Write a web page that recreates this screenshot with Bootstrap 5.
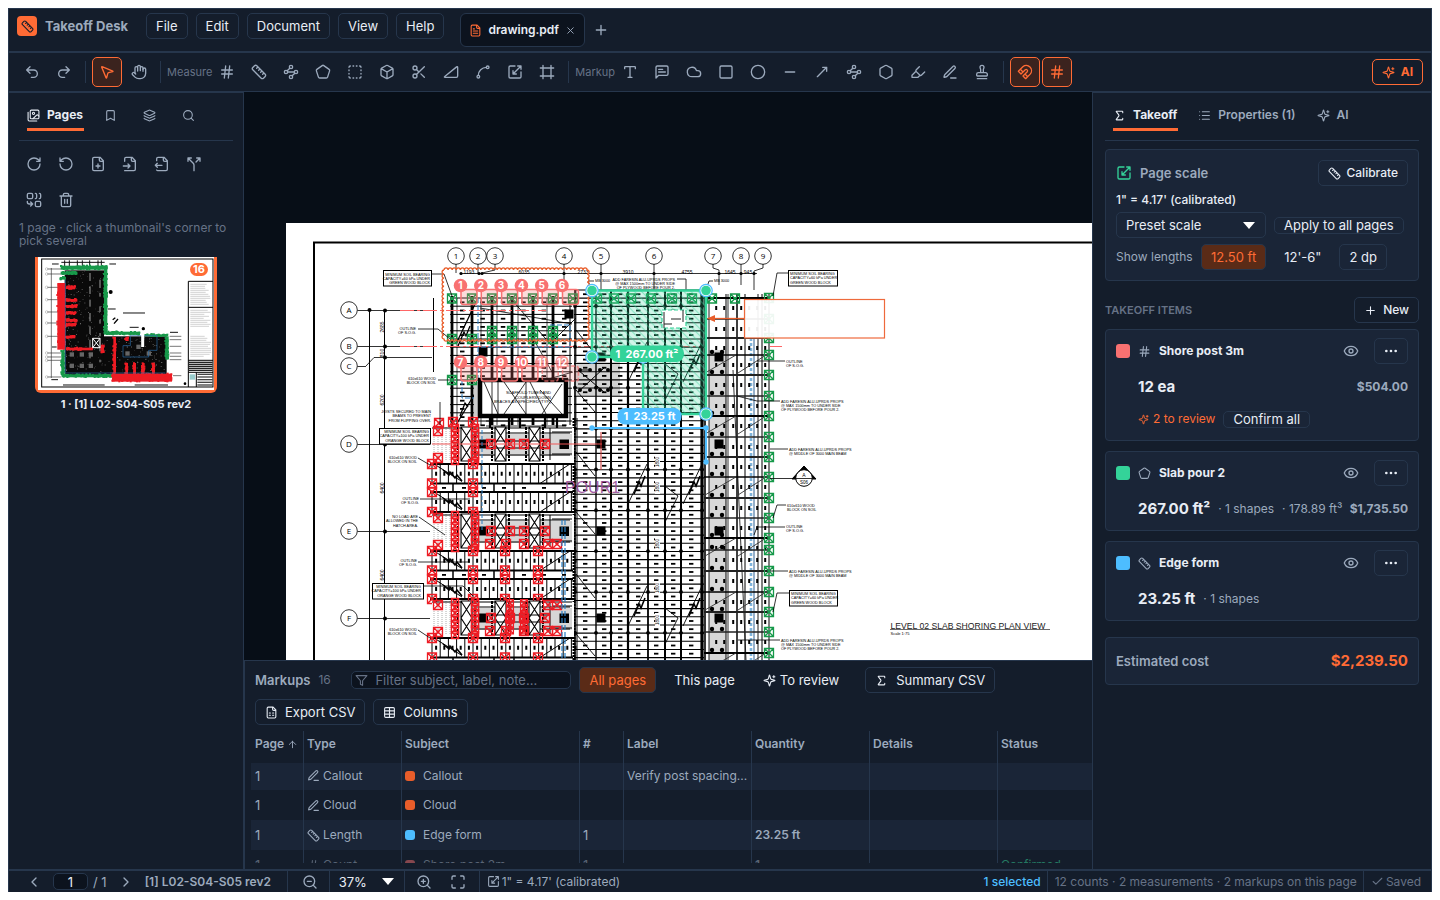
<!DOCTYPE html>
<html lang="en">
<head>
<meta charset="utf-8">
<meta name="viewport" content="width=device-width, initial-scale=1">
<title>Takeoff Desk</title>
<link href="https://cdn.jsdelivr.net/npm/bootstrap@5.3.0/dist/css/bootstrap.min.css" rel="stylesheet">
<style>
:root{--bg:#141d2b;--panel:#1a2537;--line:#26364c;--deep:#0c131e;--canvas:#070e17;--fg:#e8edf5;--mid:#9caabd;--dim:#667286;--accent:#ff6b35;--accent-bg:#5a2b17;--blue:#4dbdff;--green:#34d399}
body{background:#fff;font-family:Inter,"Liberation Sans",sans-serif;font-size:12px;line-height:16px;color:var(--mid);padding:8px;height:100vh;overflow:hidden}
.app{background:var(--bg);border:1px solid var(--line);border-bottom:0;height:100%}
.ic{width:16px;height:16px;fill:none;stroke:currentColor;stroke-width:2;stroke-linecap:round;stroke-linejoin:round;flex:none}
.ic-s{width:13px;height:13px}
.ic-xs{width:11px;height:11px}
.good{color:var(--green)}
.muted{color:var(--dim)}
.topbar{height:43px;padding:4px 8px;border-bottom:1px solid var(--line)}
.brand{height:26px}
.logo{width:20px;height:20px;border-radius:4px;background:var(--accent);color:#141d2b}
.brand-name{font-size:13px;font-weight:700;color:var(--mid);min-width:85px}
.tool-text{font-size:11px;color:var(--dim);margin-right:-2px}
.ui-btn{--bs-btn-padding-x:9px;--bs-btn-padding-y:0;--bs-btn-font-size:13px;--bs-btn-line-height:16px;--bs-btn-font-weight:400;--bs-btn-color:var(--fg);--bs-btn-border-color:var(--line);--bs-btn-hover-color:#fff;--bs-btn-hover-bg:#223047;--bs-btn-hover-border-color:var(--line);--bs-btn-border-radius:5px;height:26px;display:inline-flex;align-items:center;justify-content:center;gap:7px;white-space:nowrap;flex:none}
.ui-btn.text12{font-size:12px;font-weight:500;gap:6px}
.ui-btn.plain{border-color:transparent}
.ui-btn.on{background:var(--accent-bg);color:var(--accent);border-color:var(--line)}
.ui-btn.slim{height:17px;overflow:visible}
.ui-btn.more{width:34px;padding:0}
.ui-btn.outline{border-color:var(--accent);color:var(--accent);font-weight:700;font-size:12px;gap:6px}
.tool{width:30px;height:30px;border:1px solid transparent;border-radius:5px;background:none;color:var(--mid);display:flex;align-items:center;justify-content:center;padding:0;flex:none}
.tool.on{border-color:var(--accent);background:#3b231e;color:var(--accent)}
.icon-btn{background:none;border:0;padding:0;color:var(--mid);display:flex}
.toolbar{height:40px;padding:4px 8px;border-top:1px solid var(--line);border-bottom:1px solid var(--line);gap:2px}
.vsep{width:1px;height:22px;background:var(--line);margin:0 4px;flex:none}
.doc-tab{height:34px;background:var(--deep);border:1px solid var(--line);border-radius:6px;padding:0 8px;color:var(--fg);font-weight:600;margin-left:8px;gap:6px}
.side{border-top:1px solid var(--line);border-bottom:1px solid var(--line)}
.side-left{width:235px;border-right:1px solid var(--line);padding:0 10px}
.side-right{width:339px;border-left:1px solid var(--line);padding:0 12px}
.tabs{padding:9px 8px;gap:20px;border-bottom:1px solid var(--line)}
.tabs button{background:none;border:0;border-bottom:3px solid transparent;height:29px;padding:0 1px 0 0;color:var(--mid);font-weight:600;display:flex;align-items:center;gap:7px}
.tabs button.on{border-color:var(--accent);color:var(--fg);font-weight:700}
.tabs .solo{padding-right:6px}
.page-tools{gap:6px 2px;padding-top:8px}
.hint{line-height:13px;color:var(--dim);padding:6px 4px 10px 0}
.thumb{width:182px;border:3px solid var(--accent);border-top:0;border-radius:0 0 6px 6px;background:#fff;padding:0;display:block}
.thumb svg{display:block;width:100%}
.thumb-name{font-size:11px;font-weight:700;color:var(--fg);margin-top:3px}
.pill{top:6px;right:6px;background:var(--accent);color:#fff;font-size:11px;line-height:13px;font-weight:700;border-radius:7px;padding:0 3px}
.canvas{background:var(--canvas);min-height:0}
.canvas svg{display:block;width:100%;height:100%}
.box{background:var(--panel);border:1px solid var(--line);border-radius:4px;padding:8px 10px 10px}
.head13{font-size:13px;font-weight:600}
.scale-head{margin-top:2px}
.scale-now{color:var(--fg);font-weight:500;padding:6px 0 4px}
.len-row{margin-top:6px}
.len-label{width:77px}
.big{font-size:15px;font-weight:700;color:var(--fg)}
.accent{color:var(--accent)}
.price{font-weight:700}
.sw{width:14px;height:14px;border-radius:3px;flex:none}
.sw10{width:10px;height:10px;border-radius:3px;flex:none}
.item-title{font-weight:700;color:var(--fg)}
.item-row{height:22px;padding-left:22px}
.item-row.first{margin-top:12px}
.item-row.next{margin-top:10px}
.eye-btn{margin-right:15px}
.items{gap:10px}
.sec-bar{margin:16px 0 6px}
.sec-title{font-size:11px;font-weight:600;color:var(--dim)}
.total{height:48px;padding:0 10px}
.sel{position:relative}
.sel select{appearance:none;background:transparent;border:1px solid var(--line);border-radius:5px;color:var(--fg);font-size:13px;height:26px;padding:0 9px;width:150px}
.sel::after{content:"";position:absolute;right:11px;top:10px;border:6px solid transparent;border-top:7px solid #fff;border-bottom:0;pointer-events:none}
.sel.zoom select{width:76px;height:21px;border-width:0 1px;border-radius:0}
.sel.zoom::after{top:7px}
.drawer{height:210px;border:1px solid var(--line);border-width:1px 0 1px 1px;overflow:hidden}
.drawer-bar{padding:6px 10px 0}
.tally{width:25px}
.filter{width:220px;height:18px;background:var(--deep);border:1px solid var(--line);border-radius:5px;padding-left:3px;gap:7px;color:var(--dim)}
.filter input{background:none;border:0;outline:0;color:var(--fg);font-size:13px;height:16px;padding:0;width:100%;min-width:0}
.filter input::placeholder{color:var(--dim);opacity:1}
.grid-wrap{margin:6px 0 0 6px;height:132px;overflow:hidden}
.marks{table-layout:fixed;width:100%;border-collapse:separate;border-spacing:0}
.marks th{height:32px;font-weight:600;padding:0 4px 6px 3px;border-right:1px solid var(--line);white-space:nowrap}
.marks td{height:30px;padding:0 4px 0 3px;border-right:1px solid var(--line);white-space:nowrap;overflow:hidden}
.marks th:first-child,.marks td:first-child{padding-left:4px}
.marks th:last-child,.marks td:last-child{border-right:0}
.marks tbody tr:first-child td{height:27px;padding-bottom:2px}
.marks tbody tr:nth-child(odd) td{background:var(--panel)}
.marks .fade-row td>*{opacity:.5}
.marks .num{font-size:13px}
.marks .qty{font-weight:600}
.marks .kind{gap:3px}
.w-page{width:53px}.w-type{width:98px}.w-subj{width:178px}.w-no{width:44px}.w-128{width:128px}.w-qty{width:118px}
.status{height:22px;border-top:1px solid var(--line);padding:0 10px 0 17px}
.status .rule{width:1px;align-self:stretch;background:var(--line)}
.page-no{width:35px;height:17px;background:var(--deep);border:1px solid var(--line);border-radius:5px;color:var(--fg);font-size:13px;text-align:center;padding:0;margin:0 5px 0 11px}
.of-pages{font-size:13px}
.gap-x{margin:0 11px}
.sheet-name{font-weight:600;width:142px}
.z-out{margin:0 11px 0 14px}.z-in{margin:0 18px 0 11px}.z-fit{margin-right:13px}
.scale-ic{margin:0 2px 0 7px}
.picked{color:var(--blue);font-weight:500;padding-right:6px}
.totals{padding:0 6px 0 7px}
.saved{padding-left:7px;gap:2px}
</style>
</head>
<body>
<svg width="0" height="0" class="position-absolute" aria-hidden="true"><defs>
<symbol id="undo" viewBox="0 0 24 24"><path d="M9 14 4 9l5-5M4 9h10.5a5.5 5.5 0 0 1 0 11H11"/></symbol>
<symbol id="redo" viewBox="0 0 24 24"><path d="m15 14 5-5-5-5M20 9H9.5a5.5 5.5 0 0 0 0 11H13"/></symbol>
<symbol id="pointer" viewBox="0 0 24 24"><path d="M4.037 4.688a.495.495 0 0 1 .651-.651l16 6.5a.5.5 0 0 1-.063.947l-6.124 1.58a2 2 0 0 0-1.438 1.435l-1.579 6.126a.5.5 0 0 1-.947.063z"/></symbol>
<symbol id="hand" viewBox="0 0 24 24"><path d="M18 11V6a2 2 0 0 0-4 0M14 10V4a2 2 0 0 0-4 0v2M10 10.5V6a2 2 0 0 0-4 0v8"/><path d="M18 8a2 2 0 1 1 4 0v6a8 8 0 0 1-8 8h-2c-2.8 0-4.5-.86-5.99-2.34l-3.6-3.6a2 2 0 0 1 2.83-2.82L7 15"/></symbol>
<symbol id="hash" viewBox="0 0 24 24"><path d="M4 9h16M4 15h16M10 3 8 21M16 3l-2 18"/></symbol>
<symbol id="ruler" viewBox="0 0 24 24"><path d="M21.3 15.3a2.4 2.4 0 0 1 0 3.4l-2.6 2.6a2.4 2.4 0 0 1-3.4 0L2.7 8.7a2.41 2.41 0 0 1 0-3.4l2.6-2.6a2.41 2.41 0 0 1 3.4 0ZM14.5 12.5l2-2M11.5 9.5l2-2M8.5 6.5l2-2M17.5 15.5l2-2"/></symbol>
<symbol id="nodes" viewBox="0 0 24 24"><circle cx="12" cy="4.5" r="2.5"/><circle cx="4.5" cy="12" r="2.5"/><circle cx="19.5" cy="12" r="2.5"/><circle cx="12" cy="19.5" r="2.5"/><path d="m10.2 6.3-3.9 3.9M7 12h10M13.8 17.7l3.9-3.9"/></symbol>
<symbol id="pentagon" viewBox="0 0 24 24"><path d="M10.83 2.38a2 2 0 0 1 2.34 0l8 5.74a2 2 0 0 1 .73 2.25l-3.04 9.26a2 2 0 0 1-1.9 1.37H7.04a2 2 0 0 1-1.9-1.37L2.1 10.37a2 2 0 0 1 .73-2.25z"/></symbol>
<symbol id="dashed" viewBox="0 0 24 24"><path d="M5 3a2 2 0 0 0-2 2M19 3a2 2 0 0 1 2 2M21 19a2 2 0 0 1-2 2M5 21a2 2 0 0 1-2-2M9 3h1M9 21h1M14 3h1M14 21h1M3 9v1M21 9v1M3 14v1M21 14v1"/></symbol>
<symbol id="cube" viewBox="0 0 24 24"><path d="M21 8a2 2 0 0 0-1-1.73l-7-4a2 2 0 0 0-2 0l-7 4A2 2 0 0 0 3 8v8a2 2 0 0 0 1 1.73l7 4a2 2 0 0 0 2 0l7-4A2 2 0 0 0 21 16ZM3.3 7l8.7 5 8.7-5M12 22V12"/></symbol>
<symbol id="scissors" viewBox="0 0 24 24"><circle cx="6" cy="6" r="3"/><circle cx="6" cy="18" r="3"/><path d="M8.12 8.12 12 12M20 4 8.12 15.88M14.8 14.8 20 20"/></symbol>
<symbol id="slope" viewBox="0 0 24 24"><path d="M22 18a2 2 0 0 1-2 2H3c-1.1 0-1.3-.6-.4-1.3L20.4 4.3c.9-.7 1.6-.4 1.6.7Z"/></symbol>
<symbol id="spline" viewBox="0 0 24 24"><circle cx="19" cy="5" r="2"/><circle cx="5" cy="19" r="2"/><path d="M5 17A12 12 0 0 1 17 5"/></symbol>
<symbol id="scale" viewBox="0 0 24 24"><path d="M12 3H5a2 2 0 0 0-2 2v14a2 2 0 0 0 2 2h14a2 2 0 0 0 2-2v-7M14 15H9v-5M16 3h5v5M21 3 9 15"/></symbol>
<symbol id="frame" viewBox="0 0 24 24"><path d="M22 6H2M22 18H2M6 2v20M18 2v20"/></symbol>
<symbol id="type" viewBox="0 0 24 24"><path d="M12 4v16M4 7V5a1 1 0 0 1 1-1h14a1 1 0 0 1 1 1v2M9 20h6"/></symbol>
<symbol id="note" viewBox="0 0 24 24"><path d="M21 15a2 2 0 0 1-2 2H7l-4 4V5a2 2 0 0 1 2-2h14a2 2 0 0 1 2 2zM13 8H7M17 12H7"/></symbol>
<symbol id="cloud" viewBox="0 0 24 24"><path d="M17.5 19H9a7 7 0 1 1 6.71-9h1.79a4.5 4.5 0 1 1 0 9Z"/></symbol>
<symbol id="square" viewBox="0 0 24 24"><rect x="3" y="3" width="18" height="18" rx="2"/></symbol>
<symbol id="circle" viewBox="0 0 24 24"><circle cx="12" cy="12" r="10"/></symbol>
<symbol id="minus" viewBox="0 0 24 24"><path d="M5 12h14"/></symbol>
<symbol id="arrow" viewBox="0 0 24 24"><path d="M13 5h6v6M19 5 5 19"/></symbol>
<symbol id="hexagon" viewBox="0 0 24 24"><path d="M21 16V8a2 2 0 0 0-1-1.73l-7-4a2 2 0 0 0-2 0l-7 4A2 2 0 0 0 3 8v8a2 2 0 0 0 1 1.73l7 4a2 2 0 0 0 2 0l7-4A2 2 0 0 0 21 16z"/></symbol>
<symbol id="marker" viewBox="0 0 24 24"><path d="m9 11-6 6v3h9l3-3M22 12l-4.6 4.6a2 2 0 0 1-2.8 0l-5.2-5.2a2 2 0 0 1 0-2.8L14 4"/></symbol>
<symbol id="pen" viewBox="0 0 24 24"><path d="M13 21h8M16.376 3.622a1 1 0 0 1 3.002 3.002L7.368 18.635a2 2 0 0 1-.855.506l-2.872.838a.5.5 0 0 1-.62-.62l.838-2.872a2 2 0 0 1 .506-.854z"/></symbol>
<symbol id="stamp" viewBox="0 0 24 24"><path d="M5 22h14M19.27 13.73A2.5 2.5 0 0 0 17.5 13h-11A2.5 2.5 0 0 0 4 15.5V17a1 1 0 0 0 1 1h14a1 1 0 0 0 1-1v-1.5c0-.66-.26-1.3-.73-1.77ZM14 13V8.5C14 7 15 7 15 5a3 3 0 0 0-6 0c0 2 1 2 1 3.5V13"/></symbol>
<symbol id="magnet" viewBox="0 0 24 24"><path d="m6 15-4-4 6.75-6.77a7.79 7.79 0 0 1 11 11L13 22l-4-4 6.39-6.36a2.14 2.14 0 0 0-3-3L6 15M5 8l4 4M12 15l4 4"/></symbol>
<symbol id="sparkles" viewBox="0 0 24 24"><path d="M9.937 15.5A2 2 0 0 0 8.5 14.063l-6.135-1.582a.5.5 0 0 1 0-.962L8.5 9.936A2 2 0 0 0 9.937 8.5l1.582-6.135a.5.5 0 0 1 .963 0L14.063 8.5A2 2 0 0 0 15.5 9.937l6.135 1.581a.5.5 0 0 1 0 .964L15.5 14.063a2 2 0 0 0-1.437 1.437l-1.582 6.135a.5.5 0 0 1-.963 0zM20 3v4M22 5h-4"/></symbol>
<symbol id="images" viewBox="0 0 24 24"><path d="M18 22H4a2 2 0 0 1-2-2V6M22 13l-1.296-1.296a2.41 2.41 0 0 0-3.408 0L11 18"/><circle cx="12" cy="8" r="2"/><rect x="6" y="2" width="16" height="16" rx="2"/></symbol>
<symbol id="bookmark" viewBox="0 0 24 24"><path d="m19 21-7-4-7 4V5a2 2 0 0 1 2-2h10a2 2 0 0 1 2 2z"/></symbol>
<symbol id="layers" viewBox="0 0 24 24"><path d="M12.83 2.18a2 2 0 0 0-1.66 0L2.6 6.08a1 1 0 0 0 0 1.83l8.58 3.91a2 2 0 0 0 1.66 0l8.58-3.9a1 1 0 0 0 0-1.83zM2 12a1 1 0 0 0 .58.91l8.6 3.91a2 2 0 0 0 1.65 0l8.58-3.9A1 1 0 0 0 22 12M2 17a1 1 0 0 0 .58.91l8.6 3.91a2 2 0 0 0 1.65 0l8.58-3.9A1 1 0 0 0 22 17"/></symbol>
<symbol id="search" viewBox="0 0 24 24"><circle cx="11" cy="11" r="8"/><path d="m21 21-4.3-4.3"/></symbol>
<symbol id="cw" viewBox="0 0 24 24"><path d="M21 12a9 9 0 1 1-9-9c2.52 0 4.93 1 6.74 2.74L21 8M21 3v5h-5"/></symbol>
<symbol id="ccw" viewBox="0 0 24 24"><path d="M3 12a9 9 0 1 0 9-9 9.75 9.75 0 0 0-6.74 2.74L3 8M3 3v5h5"/></symbol>
<symbol id="fileplus" viewBox="0 0 24 24"><path d="M15 2H6a2 2 0 0 0-2 2v16a2 2 0 0 0 2 2h12a2 2 0 0 0 2-2V7ZM14 2v4a2 2 0 0 0 2 2h4M9 15h6M12 18v-6"/></symbol>
<symbol id="filein" viewBox="0 0 24 24"><path d="M4 22h14a2 2 0 0 0 2-2V7l-5-5H6a2 2 0 0 0-2 2v4M14 2v4a2 2 0 0 0 2 2h4M2 15h10M9 18l3-3-3-3"/></symbol>
<symbol id="fileout" viewBox="0 0 24 24"><path d="M14 2v4a2 2 0 0 0 2 2h4M4 7V4a2 2 0 0 1 2-2h9l5 5v13a2 2 0 0 1-2 2H6a2 2 0 0 1-2-1M5 11l-3 3M5 17l-3-3h10"/></symbol>
<symbol id="split" viewBox="0 0 24 24"><path d="M16 3h5v5M8 3H3v5M12 22v-8.3a4 4 0 0 0-1.172-2.872L3 3M15 9l6-6"/></symbol>
<symbol id="combine" viewBox="0 0 24 24"><rect x="2" y="2" width="8" height="8" rx="2"/><rect x="14" y="14" width="8" height="8" rx="2"/><path d="M14 2c1.1 0 2 .9 2 2v4c0 1.1-.9 2-2 2M20 2c1.1 0 2 .9 2 2v4c0 1.1-.9 2-2 2M10 18H5c-1.7 0-3-1.3-3-3v-1M7 21l3-3-3-3"/></symbol>
<symbol id="trash" viewBox="0 0 24 24"><path d="M3 6h18M19 6v14a2 2 0 0 1-2 2H7a2 2 0 0 1-2-2V6M8 6V4a2 2 0 0 1 2-2h4a2 2 0 0 1 2 2v2M10 11v6M14 11v6"/></symbol>
<symbol id="sigma" viewBox="0 0 24 24"><path d="M18 7V5a1 1 0 0 0-1-1H6.5a.5.5 0 0 0-.4.8l4.5 6a2 2 0 0 1 0 2.4l-4.5 6a.5.5 0 0 0 .4.8H17a1 1 0 0 0 1-1v-2"/></symbol>
<symbol id="list" viewBox="0 0 24 24"><path d="M8 5h13M8 12h13M8 19h13M3 5h.01M3 12h.01M3 19h.01"/></symbol>
<symbol id="eye" viewBox="0 0 24 24"><path d="M2.062 12.348a1 1 0 0 1 0-.696 10.75 10.75 0 0 1 19.876 0 1 1 0 0 1 0 .696 10.75 10.75 0 0 1-19.876 0"/><circle cx="12" cy="12" r="3"/></symbol>
<symbol id="dots" viewBox="0 0 24 24"><circle cx="12" cy="12" r="1"/><circle cx="19" cy="12" r="1"/><circle cx="5" cy="12" r="1"/></symbol>
<symbol id="plus" viewBox="0 0 24 24"><path d="M5 12h14M12 5v14"/></symbol>
<symbol id="x" viewBox="0 0 24 24"><path d="M18 6 6 18M6 6l12 12"/></symbol>
<symbol id="left" viewBox="0 0 24 24"><path d="m15 18-6-6 6-6"/></symbol>
<symbol id="right" viewBox="0 0 24 24"><path d="m9 18 6-6-6-6"/></symbol>
<symbol id="zin" viewBox="0 0 24 24"><circle cx="11" cy="11" r="8"/><path d="m21 21-4.3-4.3M11 8v6M8 11h6"/></symbol>
<symbol id="zout" viewBox="0 0 24 24"><circle cx="11" cy="11" r="8"/><path d="m21 21-4.3-4.3M8 11h6"/></symbol>
<symbol id="fit" viewBox="0 0 24 24"><path d="M8 3H5a2 2 0 0 0-2 2v3M21 8V5a2 2 0 0 0-2-2h-3M3 16v3a2 2 0 0 0 2 2h3M16 21h3a2 2 0 0 0 2-2v-3"/></symbol>
<symbol id="funnel" viewBox="0 0 24 24"><path d="M22 3H2l8 9.46V19l4 2v-8.54z"/></symbol>
<symbol id="sheet" viewBox="0 0 24 24"><path d="M15 2H6a2 2 0 0 0-2 2v16a2 2 0 0 0 2 2h12a2 2 0 0 0 2-2V7ZM14 2v4a2 2 0 0 0 2 2h4M8 13h2M14 13h2M8 17h2M14 17h2"/></symbol>
<symbol id="filetext" viewBox="0 0 24 24"><path d="M15 2H6a2 2 0 0 0-2 2v16a2 2 0 0 0 2 2h12a2 2 0 0 0 2-2V7ZM14 2v4a2 2 0 0 0 2 2h4M10 9H8M16 13H8M16 17H8"/></symbol>
<symbol id="table" viewBox="0 0 24 24"><path d="M12 3v18M3 9h18M3 15h18"/><rect x="3" y="3" width="18" height="18" rx="2"/></symbol>
<symbol id="up" viewBox="0 0 24 24"><path d="m5 12 7-7 7 7M12 19V5"/></symbol>
<symbol id="check" viewBox="0 0 24 24"><path d="M20 6 9 17l-5-5"/></symbol>
</defs></svg>

<div class="app d-flex flex-column">
  <header class="topbar d-flex align-items-start gap-2">
    <div class="brand d-flex align-items-center gap-2">
      <span class="logo d-flex align-items-center justify-content-center"><svg class="ic ic-s"><use href="#ruler"/></svg></span>
      <span class="brand-name">Takeoff Desk</span>
    </div>
    <nav class="d-flex gap-2 ms-2">
      <button class="btn ui-btn">File</button><button class="btn ui-btn">Edit</button><button class="btn ui-btn">Document</button><button class="btn ui-btn">View</button><button class="btn ui-btn">Help</button>
    </nav>
    <div class="d-flex align-items-center gap-2">
      <div class="doc-tab d-flex align-items-center"><svg class="ic ic-s accent"><use href="#filetext"/></svg><span>drawing.pdf</span><button class="icon-btn muted" aria-label="Close"><svg class="ic ic-xs"><use href="#x"/></svg></button></div>
      <button class="icon-btn" aria-label="New tab"><svg class="ic"><use href="#plus"/></svg></button>
    </div>
  </header>

  <div class="toolbar d-flex align-items-center" id="toolbar"></div>

  <div class="d-flex flex-grow-1 overflow-hidden">
    <aside class="side side-left flex-shrink-0">
      <div class="tabs d-flex">
        <button class="on"><svg class="ic ic-s"><use href="#images"/></svg>Pages</button>
        <button class="solo" aria-label="Bookmarks"><svg class="ic ic-s"><use href="#bookmark"/></svg></button>
        <button class="solo" aria-label="Layers"><svg class="ic ic-s"><use href="#layers"/></svg></button>
        <button class="solo" aria-label="Search"><svg class="ic ic-s"><use href="#search"/></svg></button>
      </div>
      <div class="page-tools d-flex flex-wrap" id="pageTools"></div>
      <div class="hint">1 page · click a thumbnail's corner to pick several</div>
      <div class="d-flex flex-column align-items-center">
        <button class="thumb position-relative" aria-label="Page 1">
          <svg viewBox="110 52 528 398" id="thumbArt"></svg>
          <span class="pill position-absolute">16</span>
        </button>
        <div class="thumb-name">1 · [1] L02-S04-S05 rev2</div>
      </div>
    </aside>

    <main class="d-flex flex-column flex-fill overflow-hidden">
      <div class="canvas flex-grow-1 overflow-hidden"><svg id="plan" role="img" aria-label="Slab shoring plan"></svg></div>
      <section class="drawer flex-shrink-0">
        <div class="drawer-bar d-flex gap-2 align-items-center">
          <span class="head13">Markups</span><span class="tally muted">16</span>
          <label class="filter d-flex align-items-center"><svg class="ic ic-s"><use href="#funnel"/></svg><input placeholder="Filter subject, label, note..." aria-label="Filter"></label>
          <button class="btn ui-btn on">All pages</button>
          <button class="btn ui-btn plain">This page</button>
          <button class="btn ui-btn plain gap-1"><svg class="ic ic-s"><use href="#sparkles"/></svg>To review</button>
          <button class="btn ui-btn ms-2 gap-2"><svg class="ic ic-s"><use href="#sigma"/></svg>Summary CSV</button>
        </div>
        <div class="drawer-bar d-flex gap-2">
          <button class="btn ui-btn"><svg class="ic ic-s"><use href="#sheet"/></svg>Export CSV</button>
          <button class="btn ui-btn"><svg class="ic ic-s"><use href="#table"/></svg>Columns</button>
        </div>
        <div class="grid-wrap">
          <table class="marks">
            <thead><tr><th class="w-page">Page <svg class="ic ic-xs"><use href="#up"/></svg></th><th class="w-type">Type</th><th class="w-subj">Subject</th><th class="w-no">#</th><th class="w-128">Label</th><th class="w-qty">Quantity</th><th class="w-128">Details</th><th>Status</th></tr></thead>
            <tbody id="rows"></tbody>
          </table>
        </div>
      </section>
    </main>

    <aside class="side side-right flex-shrink-0">
      <div class="tabs d-flex">
        <button class="on"><svg class="ic ic-s"><use href="#sigma"/></svg>Takeoff</button>
        <button><svg class="ic ic-s"><use href="#list"/></svg>Properties (1)</button>
        <button><svg class="ic ic-s"><use href="#sparkles"/></svg>AI</button>
      </div>
      <section class="box mt-2">
        <div class="scale-head d-flex align-items-center gap-2"><svg class="ic good"><use href="#scale"/></svg><span class="head13 flex-grow-1">Page scale</span><button class="btn ui-btn text12"><svg class="ic ic-s"><use href="#ruler"/></svg>Calibrate</button></div>
        <div class="scale-now">1" = 4.17' (calibrated)</div>
        <div class="d-flex align-items-center gap-2"><div class="sel"><select aria-label="Preset scale"><option>Preset scale</option></select></div><button class="btn ui-btn slim">Apply to all pages</button></div>
        <div class="len-row d-flex align-items-center gap-2"><span class="len-label">Show lengths</span><button class="btn ui-btn on">12.50 ft</button><button class="btn ui-btn plain">12'-6"</button><button class="btn ui-btn">2 dp</button></div>
      </section>
      <div class="sec-bar d-flex align-items-center justify-content-between"><span class="sec-title">TAKEOFF ITEMS</span><button class="btn ui-btn text12"><svg class="ic ic-s"><use href="#plus"/></svg>New</button></div>
      <div class="items d-flex flex-column" id="items"></div>
      <div class="box total mt-3 d-flex align-items-center justify-content-between"><span class="head13">Estimated cost</span><span class="big accent">$2,239.50</span></div>
    </aside>
  </div>

  <footer class="status d-flex align-items-center">
    <button class="icon-btn" aria-label="Previous"><svg class="ic"><use href="#left"/></svg></button>
    <input class="page-no" value="1" aria-label="Page"><span class="of-pages">/ 1</span>
    <button class="icon-btn gap-x" aria-label="Next"><svg class="ic"><use href="#right"/></svg></button>
    <span class="sheet-name">[1] L02-S04-S05 rev2</span>
    <span class="rule"></span>
    <button class="icon-btn z-out" aria-label="Zoom out"><svg class="ic"><use href="#zout"/></svg></button>
    <span class="sel zoom"><select aria-label="Zoom"><option>37%</option></select></span>
    <button class="icon-btn z-in" aria-label="Zoom in"><svg class="ic"><use href="#zin"/></svg></button>
    <button class="icon-btn z-fit" aria-label="Fit page"><svg class="ic"><use href="#fit"/></svg></button>
    <span class="rule"></span>
    <svg class="ic ic-s scale-ic"><use href="#scale"/></svg><span>1" = 4.17' (calibrated)</span>
    <span class="picked ms-auto">1 selected</span><span class="rule"></span>
    <span class="totals muted">12 counts · 2 measurements · 2 markups on this page</span><span class="rule"></span>
    <span class="saved muted d-flex align-items-center"><svg class="ic ic-s"><use href="#check"/></svg>Saved</span>
  </footer>
</div>

<script src="https://cdn.jsdelivr.net/npm/bootstrap@5.3.0/dist/js/bootstrap.bundle.min.js"></script>
<script>
const icon = (n, c = 'ic') => `<svg class="${c}"><use href="#${n}"/></svg>`;
const tool = n => { const on = n[0] === '*'; n = n.replace('*', ''); return `<button class="tool${on ? ' on' : ''}" aria-label="${n}">${icon(n)}</button>`; };
const sep = '<span class="vsep"></span>';
document.getElementById('toolbar').innerHTML =
  ['undo', 'redo'].map(tool).join('') + sep + ['*pointer', 'hand'].map(tool).join('') + sep +
  '<span class="tool-text">Measure</span>' + ['hash', 'ruler', 'nodes', 'pentagon', 'dashed', 'cube', 'scissors', 'slope', 'spline', 'scale', 'frame'].map(tool).join('') + sep +
  '<span class="tool-text">Markup</span>' + ['type', 'note', 'cloud', 'square', 'circle', 'minus', 'arrow', 'nodes', 'hexagon', 'marker', 'pen', 'stamp'].map(tool).join('') + sep +
  ['*magnet', '*hash'].map(tool).join('') + `<button class="btn ui-btn outline ms-auto">${icon('sparkles', 'ic ic-s')}AI</button>`;
document.getElementById('pageTools').innerHTML = ['cw', 'ccw', 'fileplus', 'filein', 'fileout', 'split', 'combine', 'trash'].map(tool).join('');

const items = [
  ['#f87171', 'hash', 'Shore post 3m', '12 ea', '', '$504.00', true],
  ['#34d399', 'pentagon', 'Slab pour 2', '267.00 ft²', '<span class="ms-2">· 1 shapes</span><span class="ms-2">· 178.89 ft³</span>', '$1,735.50'],
  ['#4dbdff', 'ruler', 'Edge form', '23.25 ft', '<span class="ms-2">· 1 shapes</span>', '']];
document.getElementById('items').innerHTML = items.map(([c, ic, t, q, more, p, rev]) => `<section class="box">
 <div class="d-flex align-items-center"><span class="sw" style="background:${c}"></span><span class="d-flex mx-2">${icon(ic, 'ic ic-s')}</span><span class="item-title flex-grow-1">${t}</span><button class="icon-btn eye-btn" aria-label="Toggle">${icon('eye')}</button><button class="btn ui-btn more" aria-label="More">${icon('dots', 'ic')}</button></div>
 <div class="item-row first d-flex align-items-center"><span class="big">${q}</span>${more}<span class="ms-auto price">${p}</span></div>
 ${rev ? `<div class="item-row next d-flex align-items-center gap-2"><span class="d-flex align-items-center gap-1 accent">${icon('sparkles', 'ic ic-xs')}2 to review</span><button class="btn ui-btn slim">Confirm all</button></div>` : ''}</section>`).join('');

const rows = [
  ['pen', 'Callout', '#e85d2a', 'Callout', '', 'Verify post spacing...', '', ''],
  ['pen', 'Cloud', '#e85d2a', 'Cloud', '', '', '', ''],
  ['ruler', 'Length', '#4dbdff', 'Edge form', '1', '', '23.25 ft', ''],
  ['hash', 'Count', '#f87171', 'Shore post 3m', '1', '', '1', 'Confirmed']];
document.getElementById('rows').innerHTML = rows.map((r, i) => `<tr class="${i === 3 ? 'fade-row' : ''}"><td class="num"><span>1</span></td><td><span class="kind d-flex align-items-center">${icon(r[0], 'ic ic-s')}${r[1]}</span></td><td><span class="d-flex align-items-center gap-2"><span class="sw10" style="background:${r[2]}"></span>${r[3]}</span></td><td class="num"><span>${r[4]}</span></td><td><span>${r[5]}</span></td><td class="qty"><span>${r[6]}</span></td><td></td><td><span class="good">${r[7]}</span></td></tr>`).join('');

/* ---- shoring plan ---- */
(() => {
  let o = '';
  const L = (x1, y1, x2, y2, w = 1, c = '#000', d = '') => o += `<path d="M${x1} ${y1}L${x2} ${y2}" stroke="${c}" stroke-width="${w}"${d ? ` stroke-dasharray="${d}"` : ''}/>`;
  const R = (x, y, w, h, f = '#000', s = 'none', sw = 1) => o += `<rect x="${x}" y="${y}" width="${w}" height="${h}" fill="${f}" stroke="${s}" stroke-width="${sw}"/>`;
  const T = (x, y, s, t, a = 'start', c = '#000', extra = '') => o += `<text x="${x}" y="${y}" font-size="${s}" text-anchor="${a}" fill="${c}" ${extra}>${t}</text>`;
  const P = (d, c = '#000', w = 1, f = 'none', x = '') => o += `<path d="${d}" stroke="${c}" stroke-width="${w}" fill="${f}" ${x}/>`;
  const X = (x, y, c, r = 4.5) => { P(`M${x - r} ${y - r}h${2 * r}v${2 * r}h${-2 * r}zl${2 * r} ${2 * r}M${x + r} ${y - r}l${-2 * r} ${2 * r}`, c, 1.3); R(x - 1.5, y - 1.5, 3, 3, c); };
  const C = (x, y, r, f = '#000', s = 'none', w = 1) => o += `<circle cx="${x}" cy="${y}" r="${r}" fill="${f}" stroke="${s}" stroke-width="${w}"/>`;
  const G = '#16994a', RD = '#ed1c24';
  R(286, 223, 2400, 1600, '#fff'); R(314, 242.5, 2300, 1500, 'none', '#000', 2);

  /* grid lines and bubbles */
  [[456, 1], [478, 2], [495, 3], [564, 4], [601, 5], [654, 6], [713, 7], [741, 8], [763, 9]].forEach(([x, n]) => { C(x, 256, 8.3, '#fff', '#000', .8); T(x, 259, 8, n, 'middle', '#000', 'class="lbl"'); });
  P('M456 264V273M478 264V273M495 264V270L482 273M564 264V290M601 264V290M654 264V290M713 264V268L719 270V285M741 264V285M763 264V268L754 271V300', '#000', .8);
  [[310, 'A'], [346, 'B'], [366, 'C'], [444, 'D'], [531, 'E'], [618, 'F']].forEach(([y, n]) => { C(349, y, 8.3, '#fff', '#000', .8); T(349, y + 3, 8, n, 'middle', '#000', 'class="lbl"'); L(357.5, y + .5, n === 'C' ? 366 : 430, y + .5, .8); if (n !== 'C') C(385, y + .5, 2); });
  P('M366 366L374 357.5H432', '#000', .8); C(385, 357.5, 2); C(369.5, 310, 2);
  L(369.5, 310, 369.5, 660, 1); L(384.5, 310, 384.5, 660, 1); L(433.5, 298, 433.5, 372, 1);
  L(461, 273.5, 757, 273.5, .8);
  [461, 479, 482, 564, 601, 654, 719, 741, 754].forEach(x => C(x, 273.5, 1.6));
  [[469, 1193], [524, 6035], [583, 2733], [628, 3910], [687, 4755], [730, 1645], [748, 945]].forEach(([x, t]) => T(x, 273.5, 5, t, 'middle'));
  [[327, 2685], [353, 810], [400, 6200], [488, 6400], [575, 6400]].forEach(([y, t]) => T(0, 0, 5, t, 'middle', '#000', `transform="translate(383.5 ${y}) rotate(-90)"`));

  /* upper left bay */
  for (let y = 298; y < 430; y += 8.2) { L(450, y, 572, y, 1); for (let x = 462; x < 572; x += 20.4) R(x - 2, y + 3.4, 4.5, 1.8); }
  P('M457 298V425M481 298V425M497 298V425M518 298V425M547 298V425M576 290V425', '#000', .7);
  [452, 472, 492, 512, 533, 553].forEach(x => { L(x, 296, x, 425, 2.8); }); L(570, 300, 570, 425, 1);
  P('M456 344L476 302M458 346l6-14 2 4 4-10', '#000', 1.3); L(512, 300, 552, 346, .9); L(480, 308, 572, 324, .8); P('M456 425L480 385M460 416l5-13 3 4', '#000', 1.3); L(552, 342, 576, 318, .9); L(534, 340, 552, 372, .8); L(573, 372, 545, 380, .8);
  L(400, 346.5, 784, 346.5, 1, '#f66', '14 3 3 3'); L(400, 310.5, 546, 310.5, 1, '#f66', '14 3 3 3');
  [[483, 352], [569, 314]].forEach(([x, y]) => R(x - 4.5, y - 4.5, 9, 9));
  P('M478 298V420M550 325h20v22h-92M462 380v18h30', '#2a7fc4', 1, 'none', 'stroke-dasharray="5 2"');
  R(474, 382, 12, 34, '#ccc');
  R(480, 380, 86, 36, '#fff', '#000', 4.5);
  P('M492 382v32M498 382v32M504 382l22 32M526 382l-22 32M526 382v32M540 390l22 24M484 382l14 32M530 382l16 32M562 384l-20 30', '#000', .8);
  [['SCAFFOLD TUBES AND', 394], ['COUPLERS DOWN', 398.5], ['BRACES AS SPECIFIED (TYP.)', 403]].forEach(([t, y]) => T(551, y, 4, t, 'end'));
  P('M490 418v10M509 418v10M520 418v10M545 418v10M557 418v10', '#000', 2.2); P('M486 421h80M486 426h80', '#000', .8);

  /* central slab bay */
  R(574, 362, 46, 34, '#d2d2d2');
  for (let y = 290; y < 664; y += 8.17) {
    L(574, y, 704, y, 1.1);
    [585, 604, 620, 638, 656, 673, 691].forEach(x => { R(x - 2, y + 3.3, 4.4, 1.8); });
  }
  [[575, 1.6], [596, 1.4], [611, 2], [628, 2.2], [648, 1.8], [665, 2], [681, 2], [702, 3.2]].forEach(([x, w]) => { L(x, 290, x, 662, w); for (let y = 306; y < 660; y += 40.85) C(x, y, 1.9); });
  for (let y = 260; y < 650; y += 122) { P(`M628 ${y + 122}L647 ${y + 82}M683 ${y + 122}L702 ${y + 82}M665 ${y + 104}l13 10l-13 26M576 ${y + 70}l19 24M576 ${y + 130}l19 22`, '#000', .9); P(`M634 ${y + 112}l5-12 2 4 4-10M689 ${y + 112}l5-12 2 4 4-10`, '#000', 1.6); }
  P('M578 370h10M578 384h10M604 368l-26 24M604 392l-26-22', '#000', 1); [580, 590, 600, 608].forEach(x => { C(x, 370, 2); C(x, 390, 2); });
  [462, 487, 544, 588, 620].forEach(y => { R(655, y - 7, 5, 14, '#fff'); T(0, 0, 4.5, '1800', 'middle', '#000', `transform="translate(659 ${y}) rotate(-90)"`); });

  /* right bay */
  R(705, 290, 65, 372, '#fff'); R(709, 350, 17, 312, '#d8d8d8');
  [[705, 1.6], [709, .9], [726, 1], [728, .8], [737, 1.5], [745, 1], [758, .9], [762, 1], [769, 1]].forEach(([x, w]) => L(x, 294, x, 662, w));
  L(751, 338, 751, 662, 2.6, '#7fb4dc', '3 2'); L(754, 338, 754, 662, 1.4, '#6a8fb4'); L(733, 370, 746, 660, .8);
  const ys = [298, 319, 338, 355, 375, 396, 416, 437, 457, 477, 498, 518, 538, 550, 571, 592, 612, 632, 653];
  ys.forEach((y, i) => {
    L(704, y, 769, y, i % 2 ? 1.5 : 2.2, i % 3 ? '#222' : '#000');
    if (y > 350) { C(712, y - 3, 2.2); C(722, y - 3, 2.2); }
    [716, 724, 733, 741, 749, 757, 765].forEach(x => R(x - .8, y + 8, 2, 4));
    if (i % 3 === 0 && y > 350) { L(705, y + 18, 736, y, .9, '#333'); L(738, y + 18, 766, y, .9, '#333'); }
    X(769, y, G);
  });
  [357, 444, 531, 618].forEach(y => { R(714.5, y - 4.5, 9, 9); R(596.5, y - 4.5, 9, 9); });
  [452, 472, 492, 512, 533, 553, 573, 597, 614, 631, 651, 672, 692, 712, 735].forEach(x => X(x, 298.5, G));
  [452, 472].forEach(x => { X(x, 339, G); X(x, 380, G); });
  [492, 512, 533, 553].forEach(x => { X(x, 331, G); X(x, 339, G); });

  /* lower left bays, one per grid line */
  R(432, 428, 142, 234, '#fff');
  L(574, 418, 574, 662, 3, '#000', '2 1'); L(577, 418, 577, 662, 1);
  [444, 531, 618].forEach((y, k) => {
    R(432, y - 16, 142, 35, '#fff'); R(462, y - 10, 110, 22, '#d6d6d6');
    for (let i = 0; i < 6; i++) L(434 + i * 4, y - 17, 434 + i * 4, y + 17, .8, '#999', '1 1');
    P(`M432 ${y - 16}h140M474 ${y - 11}h96M474 ${y + 11}h96`, '#000', 1);
    [466, 500, 534].forEach(x => { R(x - 5, y - 17, 11, 34, '#fff'); P(`M${x - 5} ${y - 17}h11v34h-11zl11 17l-11 17M${x + 6} ${y - 17}l-11 17l11 17`, '#000', 1.1); P(`M${x - 8} ${y - 17}v34M${x + 9} ${y - 17}v34`, '#000', 2, 'none', 'stroke-dasharray="3 1"'); });
    R(479, y - 4.5, 9, 9); R(559.5, y - 4.5, 9.5, 9.5);
    P(`M552 ${y - 12}h20M552 ${y + 10}h20M550 ${y - 16}v32M486 ${y - 3}h64M486 ${y + 4}h64`, '#000', 1);
    [[20, 39.5], [48, 68]].forEach(([a, b]) => {
      for (let x = 432; x < 574; x += 8.2) { L(x, y + a, x, y + b, 1); R(x + 3.1, y + (a + b) / 2 - 2, 2, 4); }
      L(434, y + a, 462, y + b - 2, 1); L(540, y + b, 570, y + a, 1);
      P(`M443 ${y + a + 6}l6 5 1-3 5 6 2-3 5 6`, '#000', 1.6);
    });
    [20, 39.5, 48, 68].forEach(d => L(430, y + d, 573, y + d, 2.2));
    for (let x = 442; x < 572; x += 20) R(x, y + 43, 4, 1.8);
    [453, 494, 514].forEach(x => L(x, y + 39, x, y + 48, 1.5));
    /* red posts */
    [455, 475].forEach(x => { for (let d = -16; d <= 17; d += 5.5) X(x, y + d, RD, 3.6); });
    X(438, y - 13, RD); X(438, y + 14, RD);
    [20, 39.5, 48, 68].forEach(d => { X(432, y + d, RD); X(473, y + d, RD); if (k) { X(505, y + d, RD); X(538, y + d, RD); } });
    [491, 510, 524, 545].forEach(x => X(x, y, RD));
    if (k) [490, 506, 524, 548, 557].forEach(x => X(x, y + 13, RD));
    if (k === 2) { [510, 524].forEach(x => { for (let d = -15; d < 16; d += 5.5) X(x, y + d, RD, 3.4); }); X(548, y - 13, RD); X(557, y - 13, RD); }
  });
  X(439, 423, RD); X(453, 422, RD); X(473, 422, RD);
  L(432, 444, 602, 444, 1, '#e55'); L(601, 432, 601, 470, 1, '#c33');
  L(562, 520, 562, 660, 1.2, '#2a7fc4', '5 2'); L(565, 520, 565, 660, 1.2, '#2a7fc4', '5 2'); L(482, 430, 482, 530, 1, '#2a7fc4', '4 2');
  T(565, 493, 16, 'POUR1', 'start', '#9b4f9b', 'opacity=".9"');

  /* notes and leaders */
  const N = (x, y, a, lines, box) => { if (box) R(box[0], box[1], box[2], box[3], '#fff', '#000', 1); lines.forEach((t, i) => T(x, y + i * 4.4, 3.8, t, a)); };
  const soil = ['MINIMUM SOIL BEARING', 'CAPACITY=60 kPa UNDER', 'GREEN WOOD BLOCK'], soilO = ['MINIMUM SOIL BEARING', 'CAPACITY=100 kPa UNDER', 'ORANGE WOOD BLOCK'];
  const alu = ['ADD FARESIN ALU-UPRDS PROPS', '@ MAX 1500mm TO UNDER SIDE', 'OF PLYWOOD BEFORE POUR 2.'], mid = alu.slice(0, 1).concat('@ MIDDLE OF 3000 MAIN BEAM'), wood = ['610x610 WOOD', 'BLOCK ON SOIL'], out = ['OUTLINE', 'OF S.O.G.'];
  N(430, 275.5, 'end', soil, [383.5, 270.5, 48, 15.5]); N(790, 275, 'start', soil, [788.5, 270.5, 49, 15.5]);
  N(429, 433, 'end', soilO, [379.5, 428.5, 51, 15.5]); N(421, 588, 'end', soilO, [372.5, 583.5, 51, 15.5]); N(791, 595, 'start', soil, [789.5, 590.5, 48, 15.5]);
  N(416, 330, 'end', out); N(436, 380, 'end', wood); N(431, 413, 'end', ['JOISTS SECURED TO MAIN', 'BEAMS TO PREVENT', 'FROM FLIPPING OVER.']);
  N(417, 459, 'end', wood); N(419, 500, 'end', out); N(418, 518, 'end', ['NO LOAD ARE', 'ALLOWED IN THE', 'HATCH AREA.']); N(417, 562, 'end', out); N(417, 631, 'end', wood);
  N(675, 280.5, 'end', alu); N(595, 282, 'start', ['MB 3000']); N(714, 282, 'start', ['MB 3000']);
  N(786, 362.5, 'start', out); N(781, 402.5, 'start', alu); N(789, 451, 'start', mid); N(787, 507, 'start', wood); N(786, 528, 'start', out); N(789, 573, 'start', mid); N(781, 641.5, 'start', alu);
  P('M773 296L777 273H788M773 518L777 505H786M773 612L777 593H789M754 535L757 527H785M757 361H785M737 396L757 401H780M770 449H788M770 571H788M738 640H780M418 329H438L450 339M438 380H450M418 458L430 465M420 499H470M418 562H470M424 586H463L473 596M418 630L430 638M419 517L445 535M432 274H444L452 296M440 402V425M588 281L592 290M588 281H594M706 290L709 281H713M677 279H686V290', '#000', .8);
  P('M792 479L804 466L816 479z', '#000', 1, '#000'); C(804, 478, 8.3, '#fff', '#000'); L(770, 478.5, 812, 478.5, .8); T(804, 477, 5, 'A', 'middle'); T(804, 484, 4.5, 'S06', 'middle');
  T(890.5, 628.5, 8.65, 'LEVEL 02 SLAB SHORING PLAN VIEW', 'start', '#222'); L(890, 629.5, 1050, 629.5, .8, '#444'); T(890.5, 635, 4, 'Scale 1:75');

  /* markup layer */
  let cl = 'M444 270'; for (let i = 0; i < 35; i++) cl += 'a2.05 2.3 0 0 1 4.09 0'; for (let i = 0; i < 17; i++) cl += 'a2.3 2.05 0 0 1 0 4.06'; for (let i = 0; i < 35; i++) cl += 'a2.05 2.3 0 0 1 -4.09 0'; for (let i = 0; i < 17; i++) cl += 'a2.3 2.05 0 0 1 0 -4.06';
  P(cl, '#e85d2a', 1.3);
  const poly = 'M592 290.5H706V414H643V357H592Z';
  P(poly, 'none', 0, '#34d399', 'fill-opacity=".22"'); P(poly, '#34d399', 2.4, 'url(#hatch)');
  R(662, 310, 24, 18, '#fff'); P('M662 310h24v18h-24z', '#34d399', 1.2, 'none', 'stroke-dasharray="4 2"'); P('M664 312v16M671 319h10M664 324h8M683 310v12', '#222', 1);
  P('M592 428H706V462', '#4dbdff', 2.2); [[592, 428], [706, 428], [706, 462]].forEach(([x, y]) => C(x, y, 2.7, '#4dbdff'));
  [[592, 290.5], [706, 290.5], [592, 357], [643, 357], [706, 414]].forEach(([x, y]) => { C(x, y, 6.2, '#fff', '#4dbdff', 1.3); C(x, y, 4.8, '#34d399'); });
  const pill = (x, y, w, c, t) => { o += `<rect x="${x}" y="${y}" width="${w}" height="16.5" rx="7.5" fill="${c}"/>`; T(x + w / 2, y + 12.3, 11, t, 'middle', '#fff', 'font-weight="700" class="ui"'); };
  pill(610, 345.5, 74, '#34d399', '1&#160; 267.00 ft²'); pill(617.5, 408, 64, '#4dbdff', '1&#160; 23.25 ft');
  o += '<rect x="744.5" y="299.5" width="140" height="38.5" fill="#fff" fill-opacity=".93" stroke="#ee6a3c" stroke-width="1.2"/>'; L(744, 318.5, 713, 318.5, 1.3, '#e85d2a'); P('M707 318.5l8-3.5v7z', 'none', 0, '#e85d2a');
  for (let i = 0; i < 12; i++) {
    const x = 460.5 + (i % 6) * 20.3, y = i < 6 ? 285.5 : 362, f = i > 9;
    o += `<g opacity="${f ? .75 : 1}"><rect x="${x + .5}" y="${y + 4}" width="16" height="15" rx="2.5" fill="#f87171" fill-opacity=".25" stroke="#f87171" stroke-width="1.5"${f ? ' stroke-dasharray="4 2"' : ''}/><circle cx="${x}" cy="${y}" r="6.8" fill="#f87171"/></g>`;
    T(x, y + 3.5, 10, i + 1, 'middle', '#fff', 'font-weight="700" class="ui"');
  }
  document.getElementById('plan').innerHTML = `<defs><pattern id="hatch" width="5" height="5" patternUnits="userSpaceOnUse" patternTransform="rotate(-45)"><path d="M2.5 0V5" stroke="#34d399" stroke-width="1.2" opacity=".45"/></pattern></defs><style>#plan text{font-family:"Liberation Sans",sans-serif}#plan text.ui{font-family:Inter,sans-serif}#plan text.lbl{font-family:"Open Sans",sans-serif}</style><g transform="translate(-244 -92)">${o}</g>`;
})();

/* ---- page thumbnail ---- */
(() => {
  let o = '', s = 7; const rnd = () => (s = (s * 16807) % 2147483647) / 2147483647;
  const P = (d, c, w, x = '') => o += `<path d="${d}" stroke="${c}" stroke-width="${w}" fill="none" ${x}/>`;
  const fuzz = (x, y, w, h, c, n) => { o += `<rect x="${x}" y="${y}" width="${w}" height="${h}" fill="${c}"/>`; for (let i = 0; i < n; i++) { const a = x - 3 + rnd() * w, b = y - 3 + rnd() * h; o += `<rect x="${a | 0}" y="${b | 0}" width="6" height="6" fill="${c}"/>`; } };
  o += '<rect x="100" y="40" width="560" height="420" fill="#fff"/><rect x="121" y="58" width="514" height="384" fill="none" stroke="#000" stroke-width="3"/>';
  P('M150 85V415M138 88H180M138 103H180M138 143H175M138 180H175M138 217H175M138 250H175M138 290H175M138 340H180M138 352H180M138 362H180M138 412H180', '#333', 2);
  [88, 103, 143, 180, 217, 250, 290, 340, 352, 362, 412].forEach(y => o += `<circle cx="136" cy="${y}" r="4" fill="none" stroke="#777"/>`);
  P('M180 68H310M190 62V80M204 62V80M228 62V80M243 62V80M265 62V80M290 62V80M300 62V80M152 73H172M324 73H344M152 322H166M320 208H343M385 263H412M506 278H530M150 420H170M185 436H310M400 436H500M365 220H431', '#111', 3);
  fuzz(190, 92, 118, 315, '#0a0a0a', 0); fuzz(306, 290, 190, 115, '#0a0a0a', 0);
  for (let i = 0; i < 420; i++) { const x = 190 + rnd() * 300, y = 92 + rnd() * 312; if (x > 306 && y < 292) continue; o += `<rect x="${x | 0}" y="${y | 0}" width="${1 + rnd() * 3 | 0}" height="2" fill="#888"/>`; }
  for (let i = 0; i < 14; i++) P(`M${266 + i % 2 * 30} ${100 + i * 20}v${8 + rnd() * 18 | 0}`, '#eee', 2);
  [[205, 338], [235, 338], [262, 338], [205, 372], [235, 372], [262, 372], [372, 335], [405, 315], [436, 335]].forEach(([x, y]) => o += `<rect x="${x}" y="${y}" width="13" height="13" fill="#666"/>`);
  fuzz(178, 78, 140, 12, '#18994a', 60); fuzz(178, 96, 50, 8, '#18994a', 25); fuzz(178, 112, 16, 8, '#18994a', 8); fuzz(308, 80, 10, 205, '#18994a', 70);
  fuzz(318, 276, 98, 9, '#18994a', 50); fuzz(432, 284, 68, 6, '#18994a', 30); fuzz(492, 290, 10, 70, '#18994a', 30); fuzz(180, 332, 9, 75, '#18994a', 30); fuzz(184, 404, 150, 9, '#18994a', 50);
  fuzz(168, 130, 24, 200, '#ed1c24', 90);
  [[140, 28], [178, 34], [196, 34], [216, 30], [238, 34], [252, 30], [288, 28], [324, 80]].forEach(([y, w]) => fuzz(194, y, w, 8, '#ed1c24', 14));
  fuzz(336, 292, 8, 110, '#ed1c24', 30); fuzz(332, 402, 180, 24, '#ed1c24', 90); [372, 396, 422, 452].forEach(x => fuzz(x, 370, 8, 34, '#ed1c24', 16)); fuzz(372, 292, 10, 12, '#ed1c24', 6); fuzz(298, 318, 10, 22, '#ed1c24', 10);
  P('M365 318h22v-30h80v44h-25v20h-77zM192 120v280h300', '#2a6fae', 2);
  P('M274 296h22v28h-22zl22 28M296 296l-22 28', '#fff', 3); P('M424 272v50', '#fff', 9); P('M334 240l8-6M338 252l12-14', '#000', 4);
  o += '<circle cx="328" cy="157" r="6"/><circle cx="426" cy="267" r="5"/><circle cx="551" cy="432" r="4"/>';
  P('M505 290H540M505 300H540M505 320H540M505 340H540M505 350H540M505 360H540M515 408H540', '#333', 2);
  P('M561 125V442M561 125H635M561 203H635M561 362H635M561 398H635M585 398V442', '#000', 3);
  for (let y = 134; y < 355; y += 6) if (y < 196 || (y > 208 && y < 262) || y > 285) P(`M567 ${y}h${40 + rnd() * 24 | 0}`, '#bbb', 2);
  for (let y = 368; y < 398; y += 6) P(`M562 ${y}h72`, '#222', 4); for (let y = 404; y < 440; y += 8) P(`M588 ${y}h46`, '#444', 4);
  o += '<rect x="565" y="404" width="16" height="16" fill="#9cc"/>';
  document.getElementById('thumbArt').innerHTML = o;
})();
</script>
</body>
</html>
